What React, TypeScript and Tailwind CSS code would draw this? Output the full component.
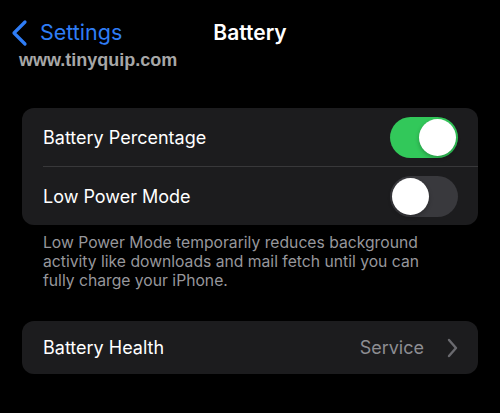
type ToggleProps = {
  on: boolean;
};

function Toggle({ on }: ToggleProps) {
  return (
    <div
      className={`flex h-[41px] w-[68px] items-center rounded-full px-[2px] ${
        on ? "justify-end bg-[#32c85a]" : "justify-start bg-[#39393d]"
      }`}
    >
      <div className="h-[37px] w-[37px] rounded-full bg-white shadow-[0_2px_4px_rgba(0,0,0,0.25)]" />
    </div>
  );
}

function BackChevron() {
  return (
    <svg width="18" height="28" viewBox="0 0 18 28" fill="none" className="shrink-0">
      <path
        d="M15 3 L4 14 L15 25"
        stroke="currentColor"
        strokeWidth="3.2"
        strokeLinecap="round"
        strokeLinejoin="round"
      />
    </svg>
  );
}

function Disclosure() {
  return (
    <svg width="12" height="20" viewBox="0 0 12 20" fill="none" className="shrink-0">
      <path
        d="M3 2 L10 10 L3 18"
        stroke="currentColor"
        strokeWidth="2.4"
        strokeLinecap="round"
        strokeLinejoin="round"
      />
    </svg>
  );
}

export default function App() {
  return (
    <div className="h-[413px] w-[500px] overflow-hidden bg-black font-['Inter',sans-serif] text-white">
      <header className="mt-[18px] grid h-[30px] grid-cols-[1fr_auto_1fr] items-center">
        <div className="flex items-center pl-[10px] text-[#2f7df6]">
          <BackChevron />
          <span className="ml-[12px] text-[21.5px] leading-none">Settings</span>
        </div>
        <h1 className="-mt-[2px] text-[21px] font-semibold leading-none">Battery</h1>
        <div />
      </header>
      <p className="mt-[3px] pl-[19px] font-['Liberation_Sans',sans-serif] text-[18px] font-bold leading-none text-[#a7a7a7]">
        www.tinyquip.com
      </p>

      <section className="mx-[22px] mt-[39px] overflow-hidden rounded-[12px] bg-[#1c1c1e]">
        <div className="flex h-[58px] items-center justify-between pl-[21px] pr-[20px]">
          <span className="text-[18px]">Battery Percentage</span>
          <Toggle on />
        </div>
        <div className="ml-[21px] h-px bg-[#38383a]" />
        <div className="flex h-[58px] items-center justify-between pl-[21px] pr-[20px]">
          <span className="text-[18px]">Low Power Mode</span>
          <Toggle on={false} />
        </div>
      </section>

      <p className="mx-[22px] mt-[8px] pl-[21px] pr-[30px] text-[15.7px] leading-[19px] text-[#97979c]">
        Low Power Mode temporarily reduces background activity like downloads and mail fetch until you can
        fully charge your iPhone.
      </p>

      <section className="mx-[22px] mt-[31px] rounded-[12px] bg-[#1c1c1e]">
        <div className="flex h-[53px] items-center pl-[21px] pr-[20px]">
          <span className="flex-1 text-[18px]">Battery Health</span>
          <span className="text-[18px] text-[#8d8d92]">Service</span>
          <span className="ml-[22px] text-[#6a6a6f]">
            <Disclosure />
          </span>
        </div>
      </section>
    </div>
  );
}
